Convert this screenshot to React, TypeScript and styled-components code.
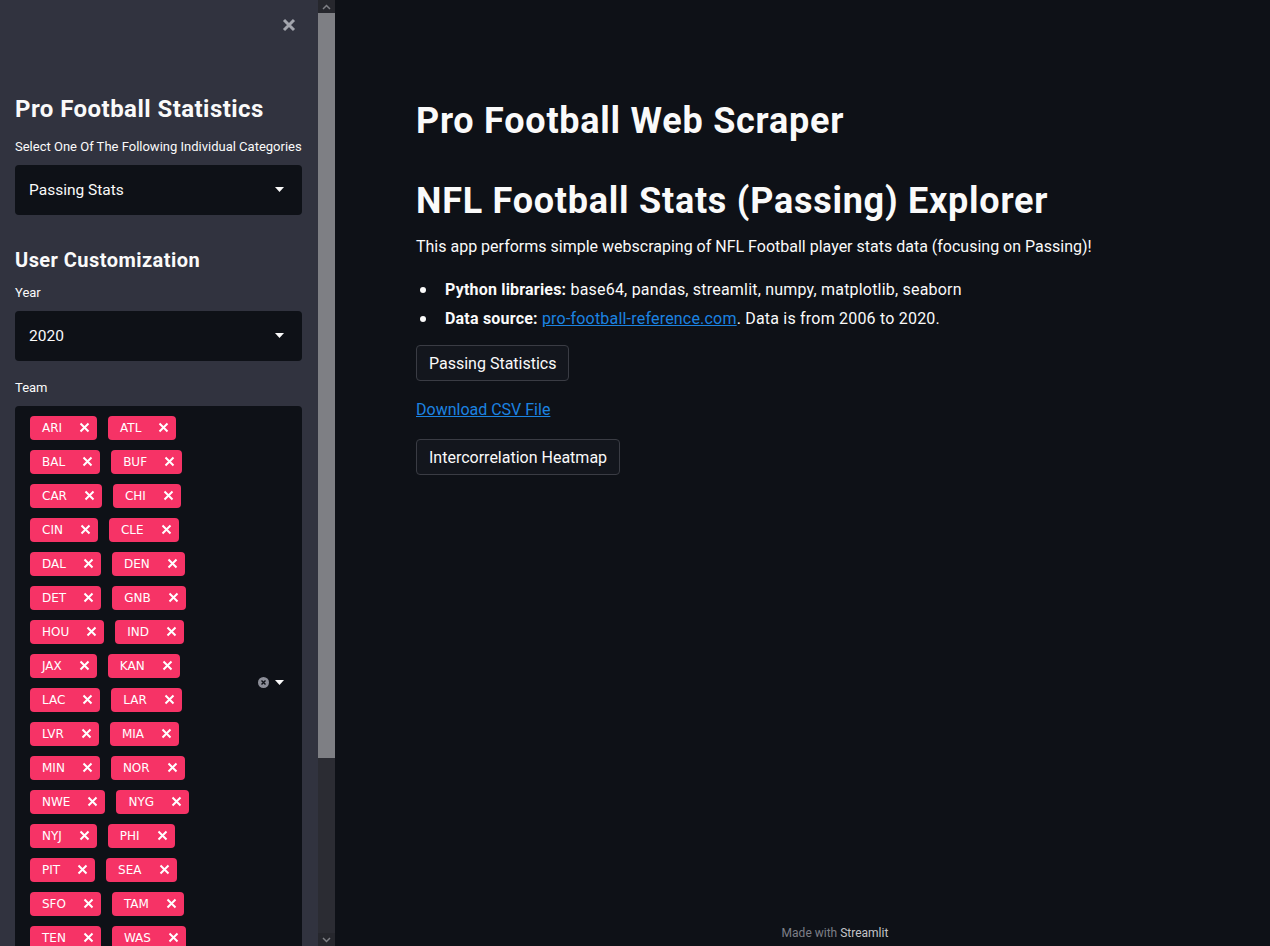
import React from "react";
import styled, { createGlobalStyle } from "styled-components";

const Global = createGlobalStyle`
  html, body { margin: 0; padding: 0; background: #0e1117; }
  body { font-family: Roboto, "Noto Sans", "DejaVu Sans", sans-serif; color: #fafafa; }
  * { box-sizing: border-box; }
`;

const Page = styled.div`
  display: flex;
  height: 946px;
  overflow: hidden;
  background: #0e1117;
`;

const Sidebar = styled.aside`
  display: flex;
  width: 335px;
  flex-shrink: 0;
  height: 100%;
`;

const SideContent = styled.div`
  width: 318px;
  background: #31333f;
  padding: 0 16px 0 15px;
  display: flex;
  flex-direction: column;
  overflow: hidden;
`;

const CloseRow = styled.div`
  display: flex;
  justify-content: flex-end;
  height: 95px;
  padding: 18px 6px 0 0;
  flex-shrink: 0;
`;

const SideTitle = styled.h2<{ $size: number }>`
  margin: 0;
  font-size: ${(p) => p.$size}px;
  line-height: 1.2;
  font-weight: 700;
  color: #fafafa;
  letter-spacing: 0.45px;
  flex-shrink: 0;
`;

const Label = styled.label`
  display: block;
  font-size: 13px;
  line-height: 19px;
  color: #fafafa;
  flex-shrink: 0;
`;

const Spacer = styled.div<{ $h: number }>`
  height: ${(p) => p.$h}px;
  flex-shrink: 0;
`;

const SelectBox = styled.div`
  height: 50px;
  background: #0e1117;
  border-radius: 4px;
  display: flex;
  align-items: center;
  justify-content: space-between;
  padding: 0 18px 0 14px;
  font-size: 15.5px;
  color: #fafafa;
  flex-shrink: 0;
`;

const MultiBox = styled.div`
  height: 552px;
  background: #0e1117;
  border-radius: 4px;
  display: flex;
  align-items: center;
  justify-content: space-between;
  padding: 10px 18px 9px 15px;
  flex-shrink: 0;
`;

const TagArea = styled.div`
  align-self: flex-start;
  display: flex;
  flex-wrap: wrap;
  width: 200px;
  column-gap: 11px;
  row-gap: 10px;
`;

const Tag = styled.span`
  display: inline-flex;
  align-items: center;
  height: 24px;
  background: #f63366;
  border-radius: 4px;
  padding: 0 7px 0 12px;
  font-family: "DejaVu Sans", Verdana, sans-serif;
  font-size: 12px;
  color: #fff;
  gap: 17px;
`;

const Controls = styled.div`
  display: flex;
  align-items: center;
  gap: 6px;
`;

const ScrollTrack = styled.div`
  width: 17px;
  background: #2b2c33;
  display: flex;
  flex-direction: column;
`;

const ScrollArrow = styled.div`
  height: 13px;
  display: flex;
  align-items: center;
  justify-content: center;
  background: #26272d;
  flex-shrink: 0;
`;

const ScrollThumb = styled.div`
  height: 745px;
  background: #7e7f84;
  flex-shrink: 0;
`;

const ScrollRest = styled.div`
  flex: 1;
`;

const Main = styled.main`
  flex: 1;
  display: flex;
  flex-direction: column;
  padding: 0 16px 0 81px;
`;

const Content = styled.div`
  flex: 1;
  padding-top: 100px;
`;

const H1 = styled.h1`
  margin: 0;
  font-size: 36px;
  line-height: 43px;
  font-weight: 700;
  color: #fafafa;
  letter-spacing: 0.75px;
`;

const Para = styled.p`
  margin: 0;
  font-size: 16px;
  line-height: 26px;
`;

const List = styled.ul`
  margin: 15px 0 0;
  padding: 0;
  list-style: none;
  font-size: 16px;
  line-height: 29px;
`;

const Item = styled.li`
  display: flex;
  align-items: center;
`;

const ItemText = styled.span`
  letter-spacing: 0.2px;
`;

const Bullet = styled.span`
  width: 6px;
  height: 6px;
  border-radius: 50%;
  background: #fafafa;
  margin: 0 19px 0 4px;
  flex-shrink: 0;
`;

const Link = styled.a`
  color: #1c83e1;
  text-decoration: underline;
  font-size: 16px;
  line-height: 26px;
`;

const Button = styled.button`
  display: inline-flex;
  align-items: center;
  height: 36px;
  padding: 0 12px;
  background: #13161d;
  border: 1px solid #3a3c44;
  border-radius: 4px;
  color: #fafafa;
  font-family: inherit;
  font-size: 16px;
`;

const Footer = styled.footer`
  height: 20px;
  display: flex;
  justify-content: center;
  align-items: flex-start;
  font-size: 12px;
  color: #7d7f87;
  gap: 3px;
`;

const FooterBrand = styled.span`
  color: #c3c4c9;
`;

const Caret = () => (
  <svg width="9" height="5" viewBox="0 0 9 5">
    <path d="M0 0 L9 0 L4.5 5 Z" fill="#fafafa" />
  </svg>
);

const TagX = () => (
  <svg width="11" height="11" viewBox="0 0 11 11">
    <path d="M1.5 1.5 L9.5 9.5 M9.5 1.5 L1.5 9.5" stroke="#fff" strokeWidth="2" />
  </svg>
);

const teams = [
  "ARI","ATL","BAL","BUF","CAR","CHI","CIN","CLE","DAL","DEN","DET","GNB","HOU","IND","JAX","KAN",
  "LAC","LAR","LVR","MIA","MIN","NOR","NWE","NYG","NYJ","PHI","PIT","SEA","SFO","TAM","TEN","WAS",
];

export default function App() {
  return (
    <>
      <Global />
      <Page>
        <Sidebar>
          <SideContent>
            <CloseRow>
              <svg width="14" height="14" viewBox="0 0 14 14">
                <path d="M2 2 L12 12 M12 2 L2 12" stroke="#a3a5ad" strokeWidth="3" />
              </svg>
            </CloseRow>
            <SideTitle $size={24}>Pro Football Statistics</SideTitle>
            <Spacer $h={13} />
            <Label>Select One Of The Following Individual Categories</Label>
            <Spacer $h={9} />
            <SelectBox>
              <span>Passing Stats</span>
              <Caret />
            </SelectBox>
            <Spacer $h={33} />
            <SideTitle $size={20}>User Customization</SideTitle>
            <Spacer $h={11} />
            <Label>Year</Label>
            <Spacer $h={9} />
            <SelectBox>
              <span>2020</span>
              <Caret />
            </SelectBox>
            <Spacer $h={17} />
            <Label>Team</Label>
            <Spacer $h={9} />
            <MultiBox>
              <TagArea>
                {teams.map((t) => (
                  <Tag key={t}>
                    <span>{t}</span>
                    <TagX />
                  </Tag>
                ))}
              </TagArea>
              <Controls>
                <svg width="11" height="11" viewBox="0 0 11 11">
                  <circle cx="5.5" cy="5.5" r="5.5" fill="#8c8e98" />
                  <path d="M3.5 3.5 L7.5 7.5 M7.5 3.5 L3.5 7.5" stroke="#0e1117" strokeWidth="1.4" />
                </svg>
                <Caret />
              </Controls>
            </MultiBox>
          </SideContent>
          <ScrollTrack>
            <ScrollArrow>
              <svg width="9" height="6" viewBox="0 0 9 6">
                <path d="M1 5 L4.5 1.5 L8 5" stroke="#7e7f84" strokeWidth="1.5" fill="none" />
              </svg>
            </ScrollArrow>
            <ScrollThumb />
            <ScrollRest />
            <ScrollArrow>
              <svg width="9" height="6" viewBox="0 0 9 6">
                <path d="M1 1 L4.5 4.5 L8 1" stroke="#7e7f84" strokeWidth="1.5" fill="none" />
              </svg>
            </ScrollArrow>
          </ScrollTrack>
        </Sidebar>
        <Main>
          <Content>
            <H1>Pro Football Web Scraper</H1>
            <Spacer $h={37} />
            <H1>NFL Football Stats (Passing) Explorer</H1>
            <Spacer $h={11} />
            <Para>This app performs simple webscraping of NFL Football player stats data (focusing on Passing)!</Para>
            <List>
              <Item>
                <Bullet />
                <ItemText>
                  <strong>Python libraries:</strong> base64, pandas, streamlit, numpy, matplotlib, seaborn
                </ItemText>
              </Item>
              <Item>
                <Bullet />
                <ItemText>
                  <strong>Data source:</strong> <Link href="#">pro-football-reference.com</Link>. Data is from 2006 to 2020.
                </ItemText>
              </Item>
            </List>
            <Spacer $h={12} />
            <Button>Passing Statistics</Button>
            <Spacer $h={16} />
            <div>
              <Link href="#">Download CSV File</Link>
            </div>
            <Spacer $h={16} />
            <Button>Intercorrelation Heatmap</Button>
          </Content>
          <Footer>
            <span>Made with</span>
            <FooterBrand>Streamlit</FooterBrand>
          </Footer>
        </Main>
      </Page>
    </>
  );
}
